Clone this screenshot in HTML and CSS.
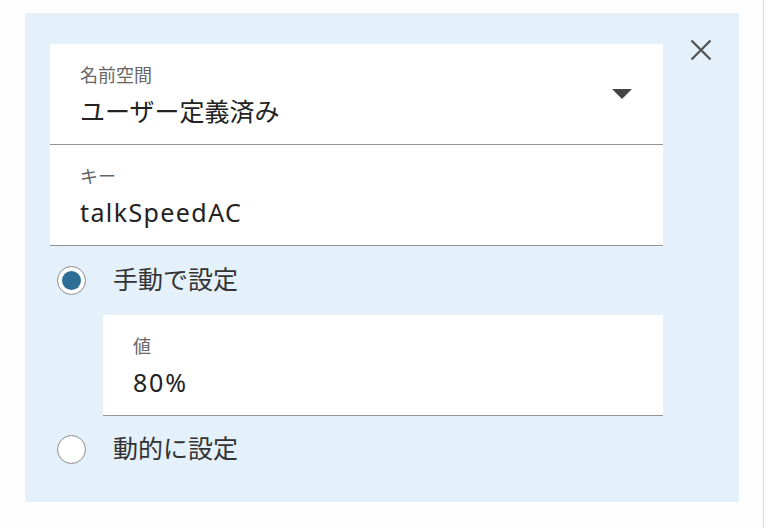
FILE: index.html
```html
<!DOCTYPE html>
<html lang="ja">
<head>
<meta charset="utf-8">
<link rel="stylesheet" href="styles.css">
</head>
<body>
<div class="page">
  <section class="panel">
    <div class="form">
      <div class="field field-select">
        <div class="field-body">
          <div class="label">名前空間</div>
          <div class="value">ユーザー定義済み</div>
        </div>
        <svg class="caret" width="20" height="10" viewBox="0 0 20 10"><path d="M0 0 H20 L10 10 Z" fill="#444"/></svg>
      </div>
      <div class="field">
        <div class="field-body">
          <div class="label">キー</div>
          <div class="value latin">talkSpeedAC</div>
        </div>
      </div>
      <label class="radio-row">
        <span class="radio checked"><span class="dot"></span></span>
        <span class="radio-text">手動で設定</span>
      </label>
      <div class="field field-nested">
        <div class="field-body">
          <div class="label">値</div>
          <div class="value latin num">80%</div>
        </div>
      </div>
      <label class="radio-row radio-row-last">
        <span class="radio"></span>
        <span class="radio-text">動的に設定</span>
      </label>
    </div>
    <div class="side">
      <button class="close" aria-label="閉じる">
        <svg width="22" height="22" viewBox="0 0 22 22"><path d="M1.5 1.5 L20.5 20.5 M20.5 1.5 L1.5 20.5" stroke="#555" stroke-width="2.4" fill="none"/></svg>
      </button>
    </div>
  </section>
</div>
</body>
</html>
```
FILE: styles.css
```css
html, body {
  margin: 0;
  padding: 0;
  background: #fdfdfd;
}
body {
  font-family: "Noto Sans", "Noto Sans CJK JP", sans-serif;
  color: #222;
}
.page {
  width: 764px;
  height: 528px;
  border-right: 1px solid #dcdcdc;
  padding: 13px 0 0 25px;
  box-sizing: border-box;
}
.panel {
  width: 714px;
  height: 489px;
  box-sizing: border-box;
  background: #e4f1fb;
  padding: 31px 0 0 25px;
  display: flex;
}
.form {
  width: 613px;
  display: flex;
  flex-direction: column;
}
.side {
  flex: 1;
  display: flex;
  justify-content: center;
  align-items: flex-start;
}
.close {
  margin: -5px 0 0 0;
  padding: 0;
  border: 0;
  background: none;
  width: 22px;
  height: 22px;
  display: block;
}
.close svg { display: block; }
.field {
  height: 101px;
  box-sizing: border-box;
  background: #fff;
  border-bottom: 1px solid #949494;
  padding: 19px 31px 0 30px;
  display: flex;
  align-items: flex-start;
}
.field-body { flex: 1; }
.field-select { align-items: center; padding-top: 0; }
.field-select .field-body { padding-top: 19px; align-self: flex-start; }
.caret { display: block; }
.field-nested {
  margin-left: 53px;
}
.label {
  font-size: 18px;
  line-height: 24px;
  color: #666;
}
.value {
  margin-top: 8px;
  font-size: 25px;
  line-height: 32px;
  color: #222;
}
.latin { letter-spacing: 1.4px; }
.num { letter-spacing: 1.8px; }
.radio-row {
  height: 69px;
  display: flex;
  align-items: center;
  padding-left: 7px;
  gap: 27px;
}
.radio-row-last { height: 67px; }
.radio {
  width: 29px;
  height: 29px;
  box-sizing: border-box;
  border: 1px solid #8a8a8a;
  border-radius: 50%;
  background: #fff;
  display: flex;
  align-items: center;
  justify-content: center;
}
.dot {
  width: 19px;
  height: 19px;
  border-radius: 50%;
  background: #2e6e96;
}
.radio-text {
  font-size: 25px;
  line-height: 32px;
  padding-bottom: 3px;
  color: #333;
}
```
